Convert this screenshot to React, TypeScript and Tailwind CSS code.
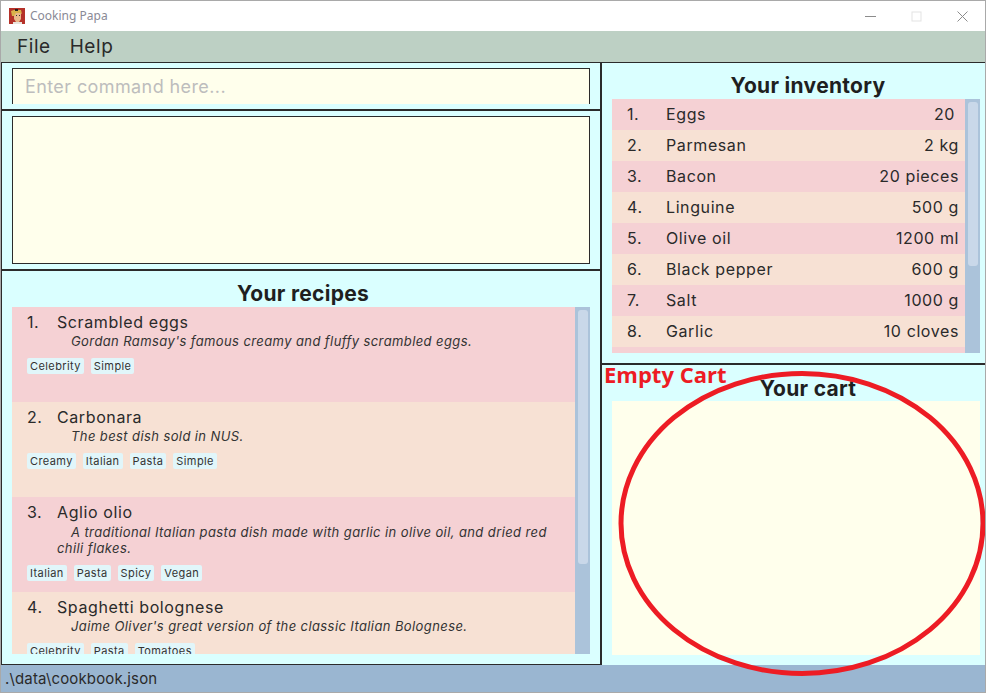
const font = { fontFamily: '"Inter", "Liberation Sans", sans-serif' };

const inventory = [
  ["1.", "Eggs", "20"],
  ["2.", "Parmesan", "2 kg"],
  ["3.", "Bacon", "20 pieces"],
  ["4.", "Linguine", "500 g"],
  ["5.", "Olive oil", "1200 ml"],
  ["6.", "Black pepper", "600 g"],
  ["7.", "Salt", "1000 g"],
  ["8.", "Garlic", "10 cloves"],
  ["", "", ""],
];

const recipes = [
  { n: "1.", name: "Scrambled eggs", desc: "Gordan Ramsay's famous creamy and fluffy scrambled eggs.", tags: ["Celebrity", "Simple"] },
  { n: "2.", name: "Carbonara", desc: "The best dish sold in NUS.", tags: ["Creamy", "Italian", "Pasta", "Simple"] },
  { n: "3.", name: "Aglio olio", desc: "A traditional Italian pasta dish made with garlic in olive oil, and dried red", desc2: "chili flakes.", tags: ["Italian", "Pasta", "Spicy", "Vegan"] },
  { n: "4.", name: "Spaghetti bolognese", desc: "Jaime Oliver's great version of the classic Italian Bolognese.", tags: ["Celebrity", "Pasta", "Tomatoes"] },
];

function Logo() {
  return (
    <svg width="16" height="16" viewBox="0 0 16 16" className="shrink-0">
      <rect width="16" height="16" fill="#b5322a" />
      <path d="M5 5h7v6l-2 3H7L5 11z" fill="#e9b88a" />
      <path d="M2 3l3-1h7l1 4-2-1H7L5 8H3z" fill="#d9b24a" />
      <rect x="6" y="1" width="3" height="2" fill="#222" />
      <rect x="7" y="7" width="1" height="1" fill="#333" />
      <rect x="10" y="7" width="1" height="1" fill="#333" />
      <rect x="4" y="14" width="9" height="2" fill="#e8e4dc" />
    </svg>
  );
}

function Scrollbar({ thumb }: { thumb: string }) {
  return (
    <div className="w-[15px] shrink-0 bg-[#abc3da] pt-[3px] pl-[3px]">
      <div className={`w-[10px] rounded-[3px] bg-[#c9d8e9] ${thumb}`} />
    </div>
  );
}

export default function App() {
  return (
    <div style={font} className="relative flex h-[693px] w-[986px] flex-col overflow-hidden border border-[#a9a9a9] bg-white text-[#1f1f1f]">
      <div className="flex h-[30px] shrink-0 items-center pl-[8px]">
        <Logo />
        <span className="ml-[5px] text-[12px] text-[#8a8a96]" style={{ fontFamily: '"Noto Sans", sans-serif' }}>Cooking Papa</span>
        <div className="ml-auto flex items-center gap-[35px] pr-[17px]">
          <svg width="11" height="11" viewBox="0 0 11 11"><path d="M0 5.5h11" stroke="#8c8c8c" /></svg>
          <svg width="11" height="11" viewBox="0 0 11 11"><rect x="1" y="1" width="9" height="9" fill="none" stroke="#e3e3e3" /></svg>
          <svg width="11" height="11" viewBox="0 0 11 11"><path d="M0.5 0.5l10 10M10.5 0.5l-10 10" stroke="#8c8c8c" /></svg>
        </div>
      </div>

      <div className="flex h-[31px] shrink-0 items-center gap-[19px] bg-[#bdd0c4] pl-[16px] pt-[1px] text-[19px] tracking-[0.55px] text-[#2a2a2a]">
        <span>File</span>
        <span>Help</span>
      </div>

      <div className="flex min-h-0 flex-1 border-t border-[#2b2b2b] bg-[#daffff]">
        <div className="flex w-[601px] shrink-0 flex-col border-r-2 border-l border-b border-[#2b2b2b]">
          <div className="h-[48px] shrink-0 border-b-2 border-[#2b2b2b] px-[10px] pt-[5px]">
            <div className="flex h-[36px] items-center border-x border-t border-[#2b2b2b] bg-[#ffffec] pl-[12px] text-[18px] tracking-[0.4px] text-[#bdbdbd]">
              Enter command here...
            </div>
          </div>
          <div className="h-[160px] shrink-0 border-b-2 border-[#2b2b2b] px-[10px] py-[5px]">
            <div className="h-[148px] border border-[#2b2b2b] bg-[#ffffec]" />
          </div>
          <div className="flex min-h-0 flex-1 flex-col px-[10px] pb-[10px]">
            <div className="flex h-[36px] shrink-0 items-end justify-center pl-[4px] text-[21px] font-bold leading-[26px] tracking-[0.3px]">Your recipes</div>
            <div className="flex min-h-0 flex-1 overflow-hidden">
              <div className="min-w-0 flex-1">
                {recipes.map((r, i) => (
                  <div key={r.n} className={`h-[95px] pl-[15px] ${i % 2 === 0 ? "bg-[#f5d1d4]" : "bg-[#f7e1d4]"}`}>
                    <div className="flex h-[30px] items-center pb-[1px] text-[16px] tracking-[0.6px] text-[#2a2a2a]">
                      <span className="w-[30px] shrink-0">{r.n}</span>
                      <span>{r.name}</span>
                    </div>
                    <div className={`pl-[44px] text-[13px] italic leading-[16px] tracking-[0.4px] text-[#333] ${r.desc2 ? "-mt-[3px]" : "-mt-[4px]"}`}>{r.desc}</div>
                    {r.desc2 && <div className="pl-[30px] text-[13px] italic leading-[17px] tracking-[0.4px] text-[#333]">{r.desc2}</div>}
                    <div className={`flex gap-[7px] ${r.desc2 ? "mt-[8px]" : "mt-[9px]"}`}>
                      {r.tags.map((t) => (
                        <span key={t} className="rounded-[2px] bg-[#e1f6fa] px-[3px] text-[11px] leading-[16px] tracking-[0.4px] text-[#333]">{t}</span>
                      ))}
                    </div>
                  </div>
                ))}
              </div>
              <Scrollbar thumb="h-[254px]" />
            </div>
          </div>
        </div>

        <div className="flex min-w-0 flex-1 flex-col">
          <div className="flex h-[302px] shrink-0 flex-col border-b-2 border-[#2b2b2b] pl-[10px] pr-[5px] pb-[10px]">
            <div className="flex h-[36px] shrink-0 items-end justify-center pl-[24px] text-[21px] font-bold leading-[26px] tracking-[0.3px]">Your inventory</div>
            <div className="flex min-h-0 flex-1 overflow-hidden">
              <div className="min-w-0 flex-1">
                {inventory.map((r, i) => (
                  <div key={i} className={`flex h-[31px] items-center pb-[2px] pl-[15px] pr-[6px] text-[16px] tracking-[0.6px] text-[#2a2a2a] ${i % 2 === 0 ? "bg-[#f5d1d4]" : "bg-[#f7e1d4]"}`}>
                    <span className="w-[39px] shrink-0">{r[0]}</span>
                    <span>{r[1]}</span>
                    <span className={`ml-auto ${i === 0 ? "pr-[4px]" : ""}`}>{r[2]}</span>
                  </div>
                ))}
              </div>
              <Scrollbar thumb="h-[164px]" />
            </div>
          </div>
          <div className="flex min-h-0 flex-1 flex-col pl-[10px] pr-[5px] pb-[10px]">
            <div className="flex h-[36px] shrink-0 items-end justify-center pl-[24px] text-[21px] font-bold leading-[24px] tracking-[0.3px]">Your cart</div>
            <div className="min-h-0 flex-1 bg-[#ffffec]" />
          </div>
        </div>
      </div>

      <div className="flex h-[27px] shrink-0 items-center bg-[#9ab6d1] pl-[4px] pt-[1px] text-[15px] tracking-[0.15px] text-[#2a2a2a]">.\data\cookbook.json</div>

      <svg className="pointer-events-none absolute left-[617px] top-[369px]" width="368" height="309" viewBox="0 0 368 309">
        <ellipse cx="184" cy="153.5" rx="181" ry="150" fill="none" stroke="#ed1c24" strokeWidth="5" />
      </svg>
      <span className="absolute left-[603px] top-[358px] text-[22px] font-bold leading-[30px] text-[#ed1c24]" style={{ fontFamily: '"Open Sans", sans-serif' }}>Empty Cart</span>
    </div>
  );
}
